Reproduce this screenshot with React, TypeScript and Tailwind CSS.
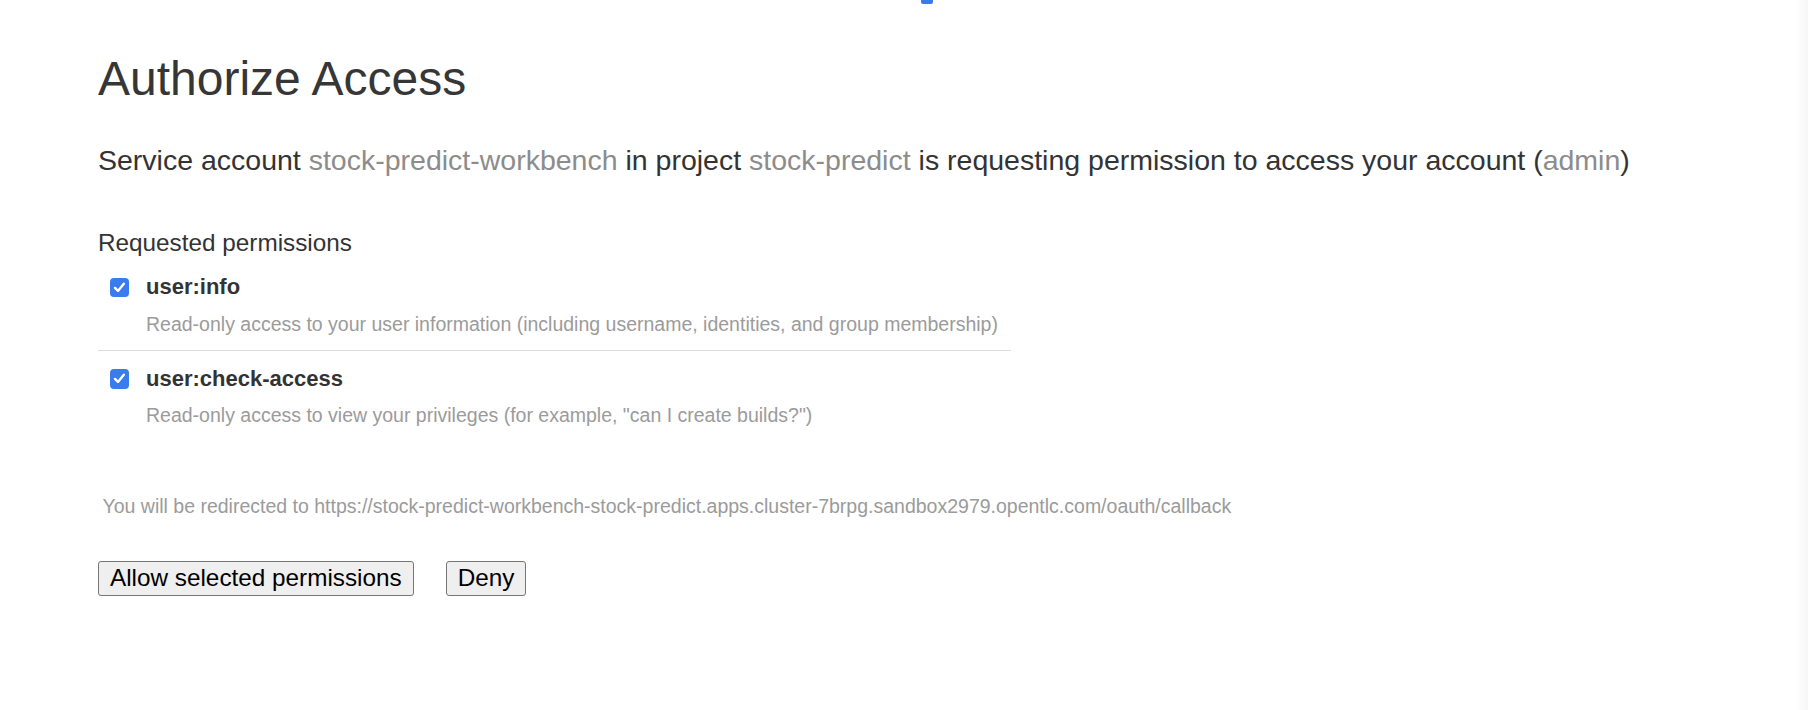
import React from "react";

function Check() {
  return (
    <span className="flex h-[19.5px] w-[19.5px] shrink-0 items-center justify-center rounded-[4px] bg-[#3a7bf0]">
      <svg width="15" height="15" viewBox="0 0 15 15" fill="none">
        <path d="M3 7.9 L6 10.9 L11.8 3.8" stroke="white" strokeWidth="2.4" strokeLinecap="round" strokeLinejoin="round" />
      </svg>
    </span>
  );
}

function Perm({ name, desc }: { name: string; desc: string }) {
  return (
    <div>
      <div className="flex items-center gap-[17px] pl-[11.5px]">
        <Check />
        <span className="text-[22px] font-bold leading-none text-[#333]">{name}</span>
      </div>
      <div className="mt-[16.5px] pl-[48px] text-[19.5px] leading-none text-[#9b9b9b]">{desc}</div>
    </div>
  );
}

export default function App() {
  return (
    <div
      className="relative min-h-[710px] w-full overflow-hidden bg-white pl-[98px] pt-[55px]"
      style={{ fontFamily: '"Liberation Sans", Arial, sans-serif' }}
    >
      <div className="absolute left-[921px] top-0 h-[4px] w-[12px] rounded-b-[2px] bg-[#3b7be9]" />
      <div className="absolute right-0 top-0 h-full w-[12px] bg-gradient-to-r from-white to-[#f6f6f6]" />

      <h1 className="text-[48px] font-normal leading-none text-[#363636]">Authorize Access</h1>

      <p className="mt-[43px] text-[28.5px] leading-none text-[#333]">
        Service account <span className="text-[#8c8c8c]">stock-predict-workbench</span> in project{" "}
        <span className="text-[#8c8c8c]">stock-predict</span> is requesting permission to access your account (
        <span className="text-[#8c8c8c]">admin</span>)
      </p>

      <div className="mt-[56px] text-[24.3px] leading-none text-[#333]">Requested permissions</div>

      <div className="mt-[21.5px] w-[913px]">
        <Perm
          name="user:info"
          desc="Read-only access to your user information (including username, identities, and group membership)"
        />
        <div className="mt-[15.5px] h-px w-full bg-[#dcdcdc]" />
        <div className="mt-[17px]">
          <Perm
            name="user:check-access"
            desc={'Read-only access to view your privileges (for example, "can I create builds?")'}
          />
        </div>
      </div>

      <div className="mt-[71px] pl-[4.5px] text-[19.5px] leading-none text-[#9b9b9b]">
        You will be redirected to
        https://stock-predict-workbench-stock-predict.apps.cluster-7brpg.sandbox2979.opentlc.com/oauth/callback
      </div>

      <div className="mt-[44.5px] flex gap-[32px]">
        <button className="h-[35px] rounded-[3px] border border-[#767676] bg-[#efefef] px-[11px] text-[24.3px] leading-none text-black">
          Allow selected permissions
        </button>
        <button className="h-[35px] rounded-[3px] border border-[#767676] bg-[#efefef] px-[11px] text-[24.3px] leading-none text-black">
          Deny
        </button>
      </div>
    </div>
  );
}
